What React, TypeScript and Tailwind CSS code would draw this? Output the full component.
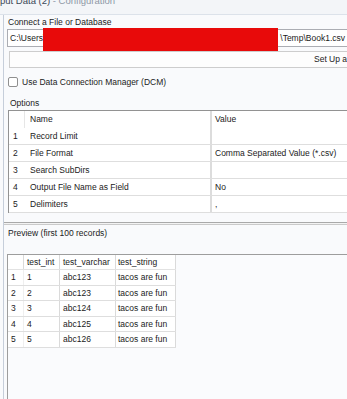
import React from "react";

const options = [
  { n: "1", name: "Record Limit", value: "" },
  { n: "2", name: "File Format", value: "Comma Separated Value (*.csv)" },
  { n: "3", name: "Search SubDirs", value: "" },
  { n: "4", name: "Output File Name as Field", value: "No" },
  { n: "5", name: "Delimiters", value: "," },
];

const preview = [
  ["1", "1", "abc123", "tacos are fun"],
  ["2", "2", "abc123", "tacos are fun"],
  ["3", "3", "abc124", "tacos are fun"],
  ["4", "4", "abc125", "tacos are fun"],
  ["5", "5", "abc126", "tacos are fun"],
];

export default function App() {
  return (
    <div className="relative w-[347px] h-[399px] overflow-hidden bg-[#f9fafc] text-[8.5px] leading-none text-[#1b1b1b] font-['Liberation_Sans',Arial,sans-serif]">
      {/* window title, cut at the top */}
      <div className="h-[15px] overflow-hidden border-b border-[#dce2ea] bg-[#f3f5f8]">
        <div className="-mt-[4px] whitespace-nowrap text-[9.5px]">
          <span className="text-[#3b4857]">put Data (2)</span>{" "}
          <span className="text-[#8e98a6]">- Configuration</span>
        </div>
      </div>

      <div className="flex h-[384px]">
        <div className="w-[3px] shrink-0" />
        <div className="w-px shrink-0 bg-[#c6ceda]" />

        <div className="flex min-w-0 flex-1 flex-col">
          {/* connect */}
          <div className="mt-[1px] flex h-[12px] items-center pl-[4px]">Connect a File or Database</div>
          <div className="ml-[3px] mt-[1px] flex h-[18px] w-[345px] shrink-0 items-center justify-between border border-[#abadb3] bg-white pl-[2px] pr-[6px] whitespace-nowrap">
            <span>C:\Users\</span>
            <span>\Temp\Book1.csv</span>
          </div>
          <div className="ml-[5px] mt-[4px] flex h-[17px] w-[360px] shrink-0 items-center border border-[#cdcdcd] bg-[#fdfdfd] pl-[304px] whitespace-nowrap">
            Set Up a Connection
          </div>

          <div className="mt-[8px] flex h-[12px] items-center gap-[4px] pl-[4px]">
            <div className="h-[10px] w-[10px] rounded-[2px] border border-[#8f8f8f] bg-white" />
            <span>Use Data Connection Manager (DCM)</span>
          </div>

          {/* options */}
          <div className="mt-[9px] flex h-[12px] items-center pl-[6px]">Options</div>
          <div className="ml-[4px] mt-[1px] w-[360px] shrink-0 border-l border-t border-[#929292] bg-white">
            <div className="flex h-[17px] items-center">
              <div className="h-full w-[16px] border-r border-[#e6e6e6]" />
              <div className="flex h-full w-[185px] items-center pl-[5px]">Name</div>
              <div className="flex h-full flex-1 items-center border-l-2 border-[#dcdcdc] pl-[3px]">Value</div>
            </div>
            {options.map((o) => (
              <div key={o.n} className="flex h-[17px] border-b border-[#dedede]">
                <div className="flex w-[16px] items-center pl-[4px]">{o.n}</div>
                <div className="flex w-[185px] items-center pl-[5px]">{o.name}</div>
                <div className="flex flex-1 items-center border-l-2 border-[#dcdcdc] pl-[3px]">
                  {o.value}
                </div>
              </div>
            ))}
          </div>

          {/* splitter */}
          <div className="mt-[9px] h-[3px] shrink-0 border-y border-t-[#a9a9a9] border-b-[#cacaca] bg-[#f3f3f3]" />

          {/* preview */}
          <div className="flex h-[17px] items-center pl-[4px]">Preview (first 100 records)</div>
          <div className="h-[12px] shrink-0" />
          <div className="ml-[3px] flex-1 border-l border-t border-[#9d9d9d] bg-[#fafbfd]">
            <div className="w-[168px] bg-white">
              <div className="flex h-[15px] border-b border-[#e2e2e2]">
                <div className="w-[16px] border-r border-[#dadada]" />
                <div className="flex w-[36px] items-center border-r border-[#dadada] pl-[3px]">test_int</div>
                <div className="flex w-[56px] items-center border-r border-[#dadada] pl-[3px]">test_varchar</div>
                <div className="flex w-[60px] items-center border-r border-[#dadada] pl-[2px]">test_string</div>
              </div>
              {preview.map((r) => (
                <div key={r[0]} className="flex h-[15.5px] border-b border-[#dedede]">
                  <div className="flex w-[16px] items-center border-r border-[#efefef] pl-[3px]">{r[0]}</div>
                  <div className="flex w-[36px] items-center border-r border-[#dadada] pl-[3px]">{r[1]}</div>
                  <div className="flex w-[56px] items-center border-r border-[#dadada] pl-[3px]">{r[2]}</div>
                  <div className="flex w-[60px] items-center border-r border-[#dadada] pl-[2px]">{r[3]}</div>
                </div>
              ))}
            </div>
          </div>
        </div>
      </div>

      {/* redaction */}
      <div className="absolute left-[43px] top-[28px] h-[23px] w-[235px] bg-[#e80a0a]" />
    </div>
  );
}
